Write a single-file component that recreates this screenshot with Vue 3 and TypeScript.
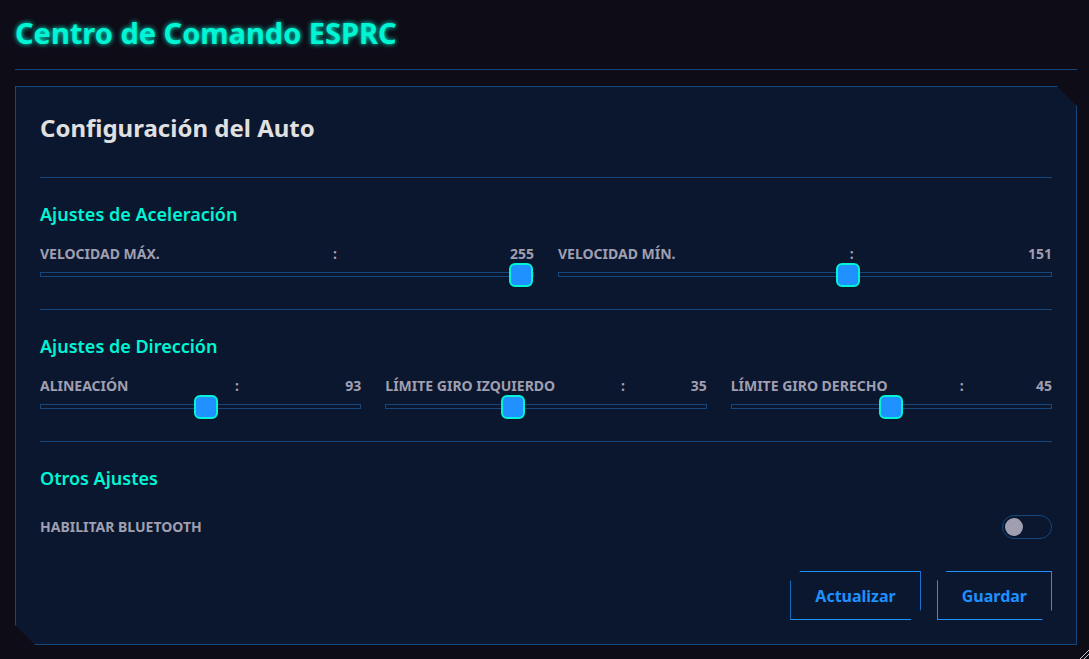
<script setup lang="ts">
import { reactive, ref } from 'vue'

interface Slider {
  id: string
  label: string
  max: number
  value: number
}

interface Group {
  title: string
  sliders: Slider[]
}

const groups = reactive<Group[]>([
  {
    title: 'Ajustes de Aceleración',
    sliders: [
      { id: 'vel-max', label: 'Velocidad Máx.', max: 255, value: 255 },
      { id: 'vel-min', label: 'Velocidad Mín.', max: 255, value: 151 },
    ],
  },
  {
    title: 'Ajustes de Dirección',
    sliders: [
      { id: 'alineacion', label: 'Alineación', max: 180, value: 93 },
      { id: 'giro-izq', label: 'Límite Giro Izquierdo', max: 90, value: 35 },
      { id: 'giro-der', label: 'Límite Giro Derecho', max: 90, value: 45 },
    ],
  },
])

const bluetooth = ref(false)
</script>

<template>
  <div class="page">
    <header class="top">
      <h1>Centro de Comando ESPRC</h1>
    </header>

    <main class="panel">
      <h2>Configuración del Auto</h2>

      <section v-for="group in groups" :key="group.title" class="group">
        <h3>{{ group.title }}</h3>
        <div class="sliders">
          <div v-for="s in group.sliders" :key="s.id" class="field">
            <label class="caption" :for="s.id">
              <span>{{ s.label }}</span>
              <span>:</span>
              <span>{{ s.value }}</span>
            </label>
            <input :id="s.id" v-model.number="s.value" class="range" type="range" min="0" :max="s.max" />
          </div>
        </div>
      </section>

      <section class="group last">
        <h3>Otros Ajustes</h3>
        <div class="switch-row">
          <label class="caption" for="bluetooth">Habilitar Bluetooth</label>
          <input id="bluetooth" v-model="bluetooth" class="switch" type="checkbox" role="switch" />
        </div>
      </section>

      <div class="actions">
        <button type="button" class="btn">Actualizar</button>
        <button type="button" class="btn">Guardar</button>
      </div>
    </main>

    <svg class="grip" width="9" height="9" viewBox="0 0 9 9" aria-hidden="true">
      <path d="M0 9L9 0M4 9L9 4" />
    </svg>
  </div>
</template>

<style>
body {
  background: #0d0c17;
}
</style>

<style scoped>
.page {
  --line: #15467c;
  --cyan: #00f5d4;
  --blue: #1e90ff;
  --muted: #a09fb1;
  box-sizing: border-box;
  min-height: 100vh;
  padding: 12px 12px 14px 15px;
  background: #0d0c17;
  color: #e0e0e0;
  font-family: "Noto Sans", sans-serif;
  font-size: 16px;
}

h1,
h2,
h3 {
  margin: 0;
}

.top {
  padding-bottom: 16px;
  margin-bottom: 16px;
  border-bottom: 1px solid var(--line);
}

h1 {
  color: var(--cyan);
  font-size: 29px;
  line-height: 41px;
  font-weight: 700;
  text-shadow: 0 0 5px var(--cyan);
}

.panel {
  padding: 24px;
  border: 1px solid var(--line);
  background: #0a172e;
  clip-path: polygon(0 0, calc(100% - 20px) 0, 100% 20px, 100% 100%, 20px 100%, 0 calc(100% - 20px));
}

h2 {
  margin-bottom: 32px;
  font-size: 24px;
  line-height: 34px;
  font-weight: 700;
}

.group {
  padding: 24px 0 32px;
  border-top: 1px solid var(--line);
}

.group.last {
  padding-bottom: 23px;
}

h3 {
  margin-bottom: 16px;
  color: var(--cyan);
  font-size: 18px;
  line-height: 24px;
  font-weight: 600;
}

.sliders {
  display: flex;
  gap: 24px;
}

.field {
  display: flex;
  flex: 1 1 0;
  flex-direction: column;
  gap: 6px;
  min-width: 0;
}

.caption {
  display: flex;
  justify-content: space-between;
  color: var(--muted);
  font-size: 14px;
  line-height: 24px;
  font-weight: 700;
  text-transform: uppercase;
}

.range {
  appearance: none;
  box-sizing: border-box;
  width: 100%;
  height: 5px;
  margin: 0;
  border: 1px solid var(--line);
  background: transparent;
  cursor: pointer;
}

.range::-webkit-slider-thumb {
  appearance: none;
  box-sizing: border-box;
  width: 24px;
  height: 24px;
  border: 2px solid var(--cyan);
  border-radius: 6px;
  background: var(--blue);
}

.switch-row {
  display: flex;
  align-items: center;
  justify-content: space-between;
  padding: 9px 0;
}

.switch {
  appearance: none;
  display: flex;
  align-items: center;
  box-sizing: border-box;
  width: 50px;
  height: 24px;
  margin: 0;
  padding: 0 2px;
  border: 1px solid var(--line);
  border-radius: 12px;
  cursor: pointer;
}

.switch::before {
  content: "";
  width: 18px;
  height: 18px;
  border-radius: 50%;
  background: var(--muted);
}

.switch:checked {
  justify-content: flex-end;
}

.switch:checked::before {
  background: var(--cyan);
}

.actions {
  display: flex;
  justify-content: flex-end;
  gap: 16px;
}

.btn {
  padding: 13px 24px 12px;
  border: 1px solid var(--blue);
  background: transparent;
  color: var(--blue);
  font: 700 16px/22px "Noto Sans", sans-serif;
  clip-path: polygon(10px 0, 100% 0, 100% calc(100% - 10px), calc(100% - 10px) 100%, 0 100%, 0 10px);
  cursor: pointer;
}

.grip {
  position: fixed;
  right: 0;
  bottom: 0;
  fill: none;
  stroke: #c8c8cc;
  stroke-width: 1;
}
</style>
